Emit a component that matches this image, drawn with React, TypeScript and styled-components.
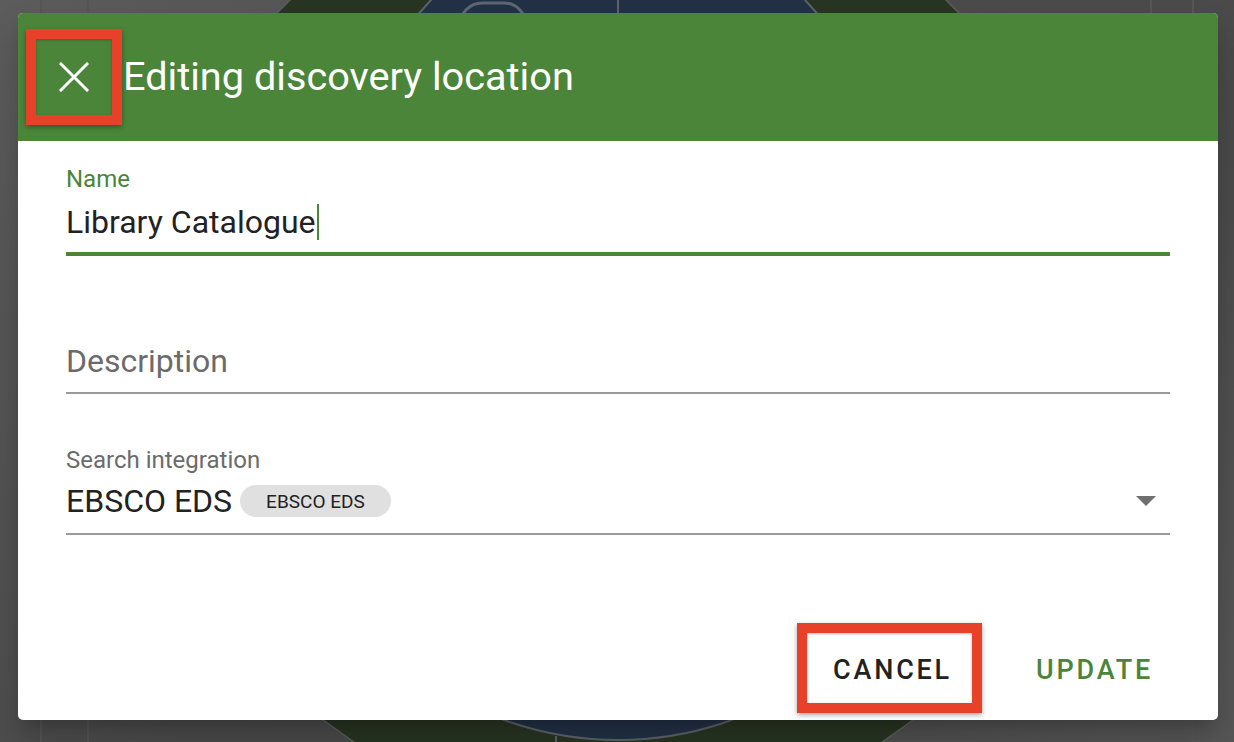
import React from "react";
import styled, { createGlobalStyle } from "styled-components";

const GREEN = "#4b8539";

const Global = createGlobalStyle`
  html, body { margin: 0; padding: 0; }
  body { font-family: Roboto, "Noto Sans", Arial, sans-serif; background: #4e4e4e; }
  * { box-sizing: border-box; }
`;

const Page = styled.div`
  position: relative;
  width: 1234px;
  height: 742px;
  overflow: hidden;
  background: linear-gradient(135deg, #5c5c5c 0%, #4b4b4b 45%, #4a4a4a 70%, #575757 100%);
`;

const Backdrop = styled.svg`
  position: absolute;
  inset: 0;
  width: 1234px;
  height: 742px;
`;

const Overlay = styled.div`
  position: relative;
  height: 100%;
  padding: 13px 16px 22px 18px;
  display: flex;
`;

const Dialog = styled.div`
  flex: 1;
  display: flex;
  flex-direction: column;
  background: #ffffff;
  border-radius: 5px;
  overflow: hidden;
  box-shadow: 0 11px 15px -7px rgba(0,0,0,.2), 0 24px 38px 3px rgba(0,0,0,.14);
`;

const Header = styled.div`
  position: relative;
  height: 128px;
  flex: none;
  display: flex;
  align-items: center;
  padding-left: 28px;
  background: ${GREEN};
  color: #fff;
`;

const CloseButton = styled.button`
  width: 56px;
  height: 56px;
  border: none;
  background: transparent;
  display: flex;
  align-items: center;
  justify-content: center;
  padding: 0;
  cursor: pointer;
`;

const Title = styled.h2`
  margin: 0 0 0 21px;
  font-family: Roboto, sans-serif;
  font-weight: 400;
  font-size: 39.7px;
  line-height: 1;
  color: #fff;
`;

const Highlight = styled.div<{ $left: number; $top: number; $w: number; $h: number }>`
  position: absolute;
  left: ${(p) => p.$left}px;
  top: ${(p) => p.$top}px;
  width: ${(p) => p.$w}px;
  height: ${(p) => p.$h}px;
  border: 10px solid #e8412a;
  box-shadow: 0 2px 5px rgba(0,0,0,.35), inset 0 1px 3px rgba(0,0,0,.25);
  pointer-events: none;
`;

const Body = styled.div`
  flex: 1;
  display: flex;
  flex-direction: column;
  padding: 26px 48px 0 48px;
`;

const Field = styled.div<{ $mt: number }>`
  display: flex;
  flex-direction: column;
  margin-top: ${(p) => p.$mt}px;
`;

const Label = styled.label<{ $focused?: boolean }>`
  font-size: 24px;
  line-height: 24px;
  color: ${(p) => (p.$focused ? GREEN : "#6b6b6b")};
`;

const InputRow = styled.div<{ $mt: number }>`
  display: flex;
  align-items: center;
  margin-top: ${(p) => p.$mt}px;
  height: 32px;
`;

const Value = styled.span`
  font-size: 32px;
  line-height: 32px;
  color: #222;
`;

const Placeholder = styled.span`
  font-size: 32px;
  line-height: 32px;
  color: #6b6b6b;
`;

const Caret = styled.span`
  display: inline-block;
  width: 2px;
  height: 36px;
  background: ${GREEN};
  margin-left: 1px;
`;

const Underline = styled.div<{ $mt: number; $active?: boolean }>`
  margin-top: ${(p) => p.$mt}px;
  height: ${(p) => (p.$active ? 4 : 2)}px;
  background: ${(p) => (p.$active ? GREEN : "#9a9a9a")};
`;

const Chip = styled.span`
  margin-left: 8px;
  height: 32px;
  padding: 0 26px;
  border-radius: 16px;
  background: #e0e0e0;
  display: inline-flex;
  align-items: center;
  font-size: 19px;
  color: #222;
`;

const Spacer = styled.div`
  flex: 1;
`;

const Arrow = styled.span`
  width: 0;
  height: 0;
  border-left: 10px solid transparent;
  border-right: 10px solid transparent;
  border-top: 10px solid #6f6f6f;
  margin-right: 14px;
`;

const Actions = styled.div`
  margin-top: auto;
  height: 100px;
  display: flex;
  align-items: center;
  justify-content: flex-end;
  padding-right: 17px;
`;

const Marked = styled.div`
  position: relative;
  display: flex;
`;

const ActionButton = styled.button<{ $primary?: boolean }>`
  border: none;
  background: transparent;
  font-family: Roboto, sans-serif;
  font-weight: 500;
  font-size: 27px;
  line-height: 27px;
  letter-spacing: 2.8px;
  color: ${(p) => (p.$primary ? GREEN : "#222")};
  padding: 0;
  margin-left: ${(p) => (p.$primary ? 84 : 0)}px;
  cursor: pointer;
`;

export default function App() {
  return (
    <>
      <Global />
      <Page>
        <Backdrop viewBox="0 0 1234 742">
          <line x1="41" y1="0" x2="41" y2="742" stroke="#565656" strokeWidth="2" />
          <line x1="88" y1="0" x2="88" y2="742" stroke="#555555" strokeWidth="2" />
          <line x1="1151" y1="0" x2="1151" y2="742" stroke="#555555" strokeWidth="2" />
          <line x1="1193" y1="0" x2="1193" y2="742" stroke="#575757" strokeWidth="2" />
          <polygon
            points="410,-120 826,-120 1116,170 1116,575 836,775 400,775 120,575 120,170"
            fill="#283523"
            stroke="#5a5f58"
            strokeWidth="1.5"
          />
          <path
            d="M 440 -10 L 796 -10 L 940 150 L 940 480 C 900 650, 760 740, 618 740 C 476 740, 336 650, 296 480 L 296 150 Z"
            fill="#223146"
            stroke="#5d626a"
            strokeWidth="2"
          />
          <line x1="618" y1="-5" x2="618" y2="20" stroke="#5d626a" strokeWidth="2" />
          <line x1="556" y1="736" x2="556" y2="745" stroke="#5d626a" strokeWidth="2" />
          <rect x="460" y="3" width="66" height="60" rx="22" fill="none" stroke="#5f6670" strokeWidth="3" />
        </Backdrop>
        <Overlay>
          <Dialog>
            <Header>
              <CloseButton aria-label="close">
                <svg width="30" height="30" viewBox="0 0 30 30">
                  <path d="M2 2 L28 28 M28 2 L2 28" stroke="#fff" strokeWidth="3" strokeLinecap="square" />
                </svg>
              </CloseButton>
              <Title>Editing discovery location</Title>
              <Highlight $left={8} $top={16} $w={96} $h={96} />
            </Header>
            <Body>
              <Field $mt={0}>
                <Label $focused>Name</Label>
                <InputRow $mt={15}>
                  <Value>Library Catalogue</Value>
                  <Caret />
                </InputRow>
                <Underline $mt={14} $active />
              </Field>
              <Field $mt={89}>
                <InputRow $mt={0}>
                  <Placeholder>Description</Placeholder>
                </InputRow>
                <Underline $mt={15} />
              </Field>
              <Field $mt={54}>
                <Label>Search integration</Label>
                <InputRow $mt={13}>
                  <Value>EBSCO EDS</Value>
                  <Chip>EBSCO EDS</Chip>
                  <Spacer />
                  <Arrow />
                </InputRow>
                <Underline $mt={16} />
              </Field>
              <Actions>
                <Marked>
                  <ActionButton>CANCEL</ActionButton>
                  <Highlight $left={-36} $top={-34} $w={185} $h={90} />
                </Marked>
                <ActionButton $primary>UPDATE</ActionButton>
              </Actions>
            </Body>
          </Dialog>
        </Overlay>
      </Page>
    </>
  );
}
